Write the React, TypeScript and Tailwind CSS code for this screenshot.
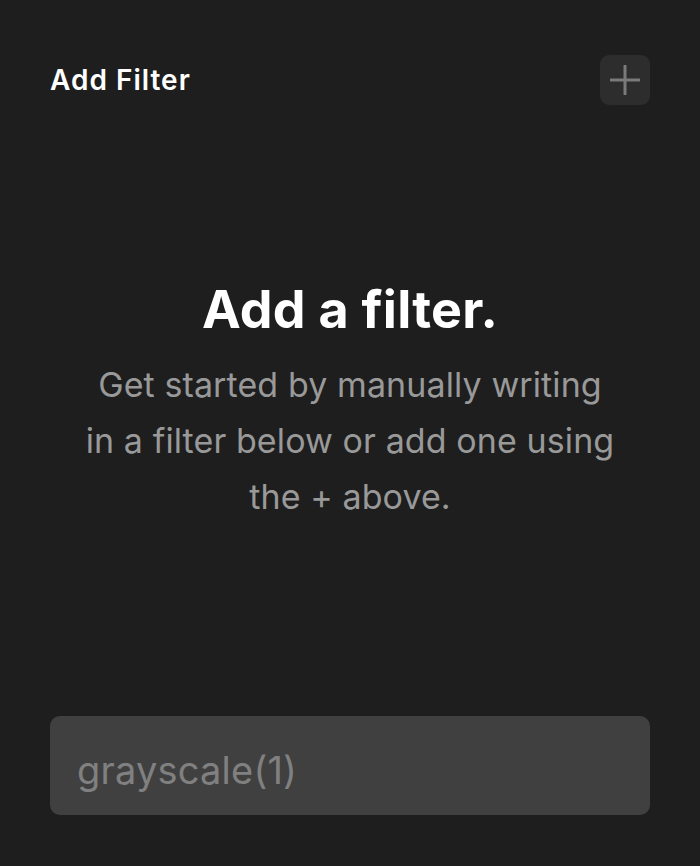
import React from "react";

export default function App() {
  return (
    <div
      className="w-[700px] h-[866px] bg-[#1e1e1e] flex flex-col px-[50px] pt-[55px] pb-[51px]"
      style={{ fontFamily: "Inter, 'Noto Sans', sans-serif" }}
    >
      <div className="flex items-center justify-between h-[50px]">
        <div className="text-white text-[28px] font-semibold tracking-[1px]">Add Filter</div>
        <button className="w-[50px] h-[50px] rounded-[9px] bg-[#2d2d2d] flex items-center justify-center">
          <svg width="30" height="30" viewBox="0 0 30 30">
            <path d="M15 1V29M1 15H29" stroke="#7a7a7a" strokeWidth="3" strokeLinecap="round" />
          </svg>
        </button>
      </div>
      <div className="flex flex-col items-center text-center mt-[175px]">
        <div className="text-white text-[52px] font-bold leading-[60px] tracking-[0.25px]">Add a filter.</div>
        <p className="text-[#999999] text-[34px] leading-[56px] mt-[17px] tracking-[0.1px]">
          Get started by manually writing
          <br />
          in a filter below or add one using
          <br />
          the + above.
        </p>
      </div>
      <div className="flex-1" />
      <div className="h-[99px] rounded-[10px] bg-[#404040] flex items-center px-[27px] pt-[10px]">
        <span className="text-[#808080] text-[38px] tracking-[0.2px]">grayscale(1)</span>
      </div>
    </div>
  );
}
